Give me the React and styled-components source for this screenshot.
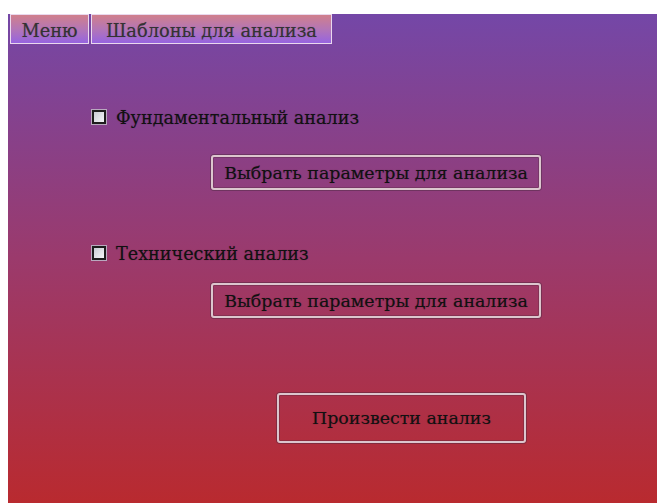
import React from "react";
import styled, { createGlobalStyle } from "styled-components";

const GlobalStyle = createGlobalStyle`
  html, body {
    margin: 0;
    padding: 0;
    background: #ffffff;
  }
  body {
    font-family: "DejaVu Serif", "Liberation Serif", serif;
  }
`;

const Page = styled.div`
  padding: 14px 0 0 8px;
  height: 503px;
  box-sizing: border-box;
  overflow: hidden;
`;

const Window = styled.div`
  height: 489px;
  background: linear-gradient(to bottom, #7447a7 0%, #9b3a6c 50%, #b92a2f 100%);
  display: flex;
  flex-direction: column;
`;

const MenuBar = styled.div`
  display: flex;
  gap: 2px;
  padding-left: 2px;
  height: 30px;
`;

const MenuItem = styled.div`
  box-sizing: border-box;
  width: ${(p) => p.$width}px;
  height: 30px;
  padding-top: 2px;
  display: flex;
  align-items: center;
  justify-content: center;
  border: 1px solid #ead8ee;
  background: linear-gradient(to bottom, #d07f8c 0%, #b476b6 50%, #9664e0 100%);
  color: #333;
  font-size: 17.8px;
  text-shadow: 0 0 1px rgba(40, 20, 40, 0.35);
`;

const Content = styled.div`
  display: flex;
  flex-direction: column;
  padding-left: 84px;
`;

const CheckRow = styled.label`
  display: flex;
  align-items: center;
  gap: 10px;
  margin-top: ${(p) => p.$top}px;
  height: 14px;
  font-size: 17.6px;
  color: #111;
  text-shadow: 0 0 1px rgba(20, 0, 20, 0.4);
`;

const CheckText = styled.span`
  padding-top: 2px;
`;

const Box = styled.span`
  box-sizing: border-box;
  width: 14px;
  height: 14px;
  border: 2px solid #1d1d1d;
  outline: 1px solid #b9a9bf;
  background: linear-gradient(135deg, #c9ccd4 0%, #f4f5f8 100%);
`;

const ActionButton = styled.button`
  box-sizing: border-box;
  width: ${(p) => p.$width}px;
  height: ${(p) => p.$height}px;
  margin-top: ${(p) => p.$top}px;
  margin-left: ${(p) => p.$left}px;
  background: transparent;
  border: 2px solid #dcc6ce;
  border-radius: 3px;
  box-shadow: 0 0 0 1px rgba(70, 40, 60, 0.45), inset 0 0 0 1px rgba(80, 40, 60, 0.35);
  font-family: inherit;
  font-size: 17.4px;
  color: #111;
  text-shadow: 0 0 1px rgba(20, 0, 20, 0.4);
  padding: 0;
  cursor: pointer;
`;

export default function App() {
  return (
    <>
      <GlobalStyle />
      <Page>
        <Window>
          <MenuBar>
            <MenuItem $width={79}>Меню</MenuItem>
            <MenuItem $width={241}>Шаблоны для анализа</MenuItem>
          </MenuBar>
          <Content>
            <CheckRow $top={66}>
              <Box />
              <CheckText>Фундаментальный анализ</CheckText>
            </CheckRow>
            <ActionButton $width={330} $height={35} $top={31} $left={119}>
              Выбрать параметры для анализа
            </ActionButton>
            <CheckRow $top={56}>
              <Box />
              <CheckText>Технический анализ</CheckText>
            </CheckRow>
            <ActionButton $width={330} $height={35} $top={23} $left={119}>
              Выбрать параметры для анализа
            </ActionButton>
            <ActionButton $width={249} $height={50} $top={75} $left={185}>
              Произвести анализ
            </ActionButton>
          </Content>
        </Window>
      </Page>
    </>
  );
}
